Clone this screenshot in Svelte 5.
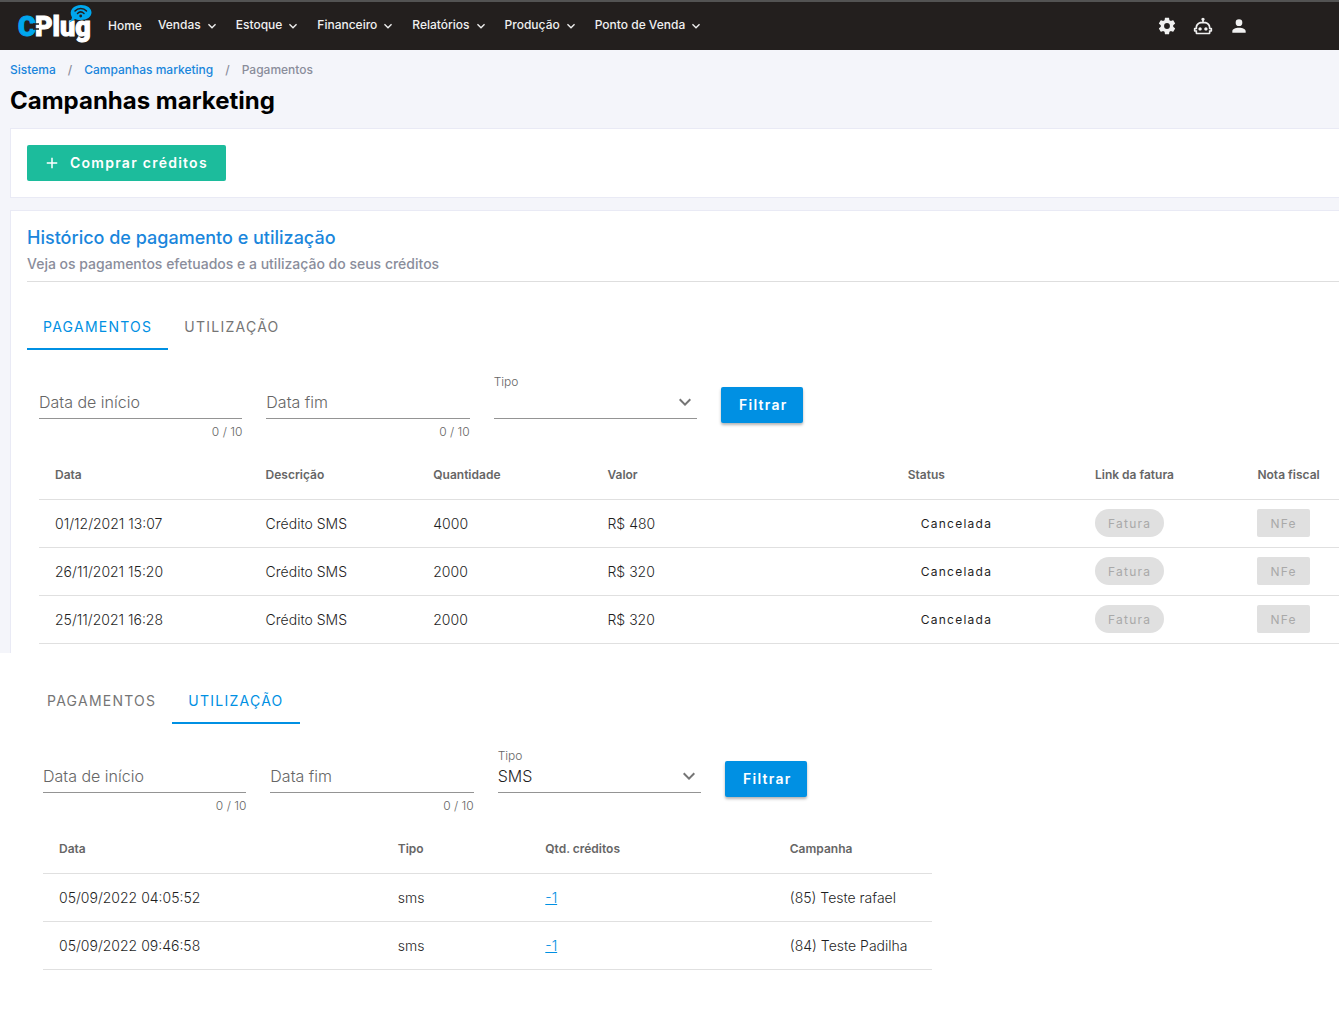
<script lang="ts">
  type Tab = 'pagamentos' | 'utilizacao';

  const menu = ['Vendas', 'Estoque', 'Financeiro', 'Relatórios', 'Produção', 'Ponto de Venda'];

  const tabs: { id: Tab; label: string }[] = [
    { id: 'pagamentos', label: 'Pagamentos' },
    { id: 'utilizacao', label: 'Utilização' }
  ];

  const payments = [
    { date: '01/12/2021 13:07', description: 'Crédito SMS', amount: 4000, value: 'R$ 480', status: 'Cancelada' },
    { date: '26/11/2021 15:20', description: 'Crédito SMS', amount: 2000, value: 'R$ 320', status: 'Cancelada' },
    { date: '25/11/2021 16:28', description: 'Crédito SMS', amount: 2000, value: 'R$ 320', status: 'Cancelada' }
  ];

  const usage = [
    { date: '05/09/2022 04:05:52', type: 'sms', credits: -1, campaign: '(85) Teste rafael' },
    { date: '05/09/2022 09:46:58', type: 'sms', credits: -1, campaign: '(84) Teste Padilha' }
  ];

  let filters = $state({
    pagamentos: { start: '', end: '', type: '' },
    utilizacao: { start: '', end: '', type: 'SMS' }
  });

  const icons = {
    chevron: 'M7.41,8.58L12,13.17L16.59,8.58L18,10L12,16L6,10L7.41,8.58Z',
    plus: 'M19,13H13V19H11V13H5V11H11V5H13V11H19V13Z',
    cog: 'M12,15.5A3.5,3.5 0 0,1 8.5,12A3.5,3.5 0 0,1 12,8.5A3.5,3.5 0 0,1 15.5,12A3.5,3.5 0 0,1 12,15.5M19.43,12.97C19.47,12.65 19.5,12.33 19.5,12C19.5,11.67 19.47,11.34 19.43,11L21.54,9.37C21.73,9.22 21.78,8.95 21.66,8.73L19.66,5.27C19.54,5.05 19.27,4.96 19.05,5.05L16.56,6.05C16.04,5.66 15.5,5.32 14.87,5.07L14.5,2.42C14.46,2.18 14.25,2 14,2H10C9.75,2 9.54,2.18 9.5,2.42L9.13,5.07C8.5,5.32 7.96,5.66 7.44,6.05L4.95,5.05C4.73,4.96 4.46,5.05 4.34,5.27L2.34,8.73C2.21,8.95 2.27,9.22 2.46,9.37L4.57,11C4.53,11.34 4.5,11.67 4.5,12C4.5,12.33 4.53,12.65 4.57,12.97L2.46,14.63C2.27,14.78 2.21,15.05 2.34,15.27L4.34,18.73C4.46,18.95 4.73,19.03 4.95,18.95L7.44,17.94C7.96,18.34 8.5,18.68 9.13,18.93L9.5,21.58C9.54,21.82 9.75,22 10,22H14C14.25,22 14.46,21.82 14.5,21.58L14.87,18.93C15.5,18.67 16.04,18.34 16.56,17.94L19.05,18.95C19.27,19.03 19.54,18.95 19.66,18.73L21.66,15.27C21.78,15.05 21.73,14.78 21.54,14.63L19.43,12.97Z',
    robot: 'M17.5 15.5C17.5 16.61 16.61 17.5 15.5 17.5S13.5 16.61 13.5 15.5 14.4 13.5 15.5 13.5 17.5 14.4 17.5 15.5M8.5 13.5C7.4 13.5 6.5 14.4 6.5 15.5S7.4 17.5 8.5 17.5 10.5 16.61 10.5 15.5 9.61 13.5 8.5 13.5M23 15V18C23 18.55 22.55 19 22 19H21V20C21 21.11 20.11 22 19 22H5C3.9 22 3 21.11 3 20V19H2C1.45 19 1 18.55 1 18V15C1 14.45 1.45 14 2 14H3C3 10.13 6.13 7 10 7H11V5.73C10.4 5.39 10 4.74 10 4C10 2.9 10.9 2 12 2S14 2.9 14 4C14 4.74 13.6 5.39 13 5.73V7H14C17.87 7 21 10.13 21 14H22C22.55 14 23 14.45 23 15M21 16H19V14C19 11.24 16.76 9 14 9H10C7.24 9 5 11.24 5 14V16H3V17H5V20H19V17H21V16Z',
    account: 'M12,4A4,4 0 0,1 16,8A4,4 0 0,1 12,12A4,4 0 0,1 8,8A4,4 0 0,1 12,4M12,14C16.42,14 20,15.79 20,18V20H4V18C4,15.79 7.58,14 12,14Z'
  };
</script>

{#snippet icon(path: string, size: number)}
  <svg class="icon" width={size} height={size} viewBox="0 0 24 24" aria-hidden="true"><path d={path} /></svg>
{/snippet}

{#snippet tabBar(active: Tab)}
  <div class="tabs" role="tablist">
    {#each tabs as tab}
      <button class="tab" class:active={tab.id === active} role="tab" aria-selected={tab.id === active}>{tab.label}</button>
    {/each}
  </div>
{/snippet}

{#snippet filterForm(id: Tab)}
  <form class="filters" onsubmit={(e) => e.preventDefault()}>
    <div class="fields">
      <div class="field">
        <input id="{id}-start" maxlength="10" bind:value={filters[id].start} />
        {#if !filters[id].start}<label class="inside" for="{id}-start">Data de início</label>{/if}
        <span class="counter">{filters[id].start.length} / 10</span>
      </div>
      <div class="field">
        <input id="{id}-end" maxlength="10" bind:value={filters[id].end} />
        {#if !filters[id].end}<label class="inside" for="{id}-end">Data fim</label>{/if}
        <span class="counter">{filters[id].end.length} / 10</span>
      </div>
      <div class="field">
        <label class="above" for="{id}-type">Tipo</label>
        <select id="{id}-type" bind:value={filters[id].type}>
          <option value=""></option>
          <option value="SMS">SMS</option>
        </select>
        <span class="arrow">{@render icon(icons.chevron, 24)}</span>
      </div>
    </div>
    <button class="btn btn-primary" type="submit">Filtrar</button>
  </form>
{/snippet}

<header class="topbar">
  <a class="logo" href="#home" aria-label="CPlug">
    <svg width="76" height="40" viewBox="0 0 76 40" aria-hidden="true">
      <text x="1" y="30" class="logo-c">C</text>
      <text x="18" y="30" class="logo-text">Plug</text>
      <path d="M16 18h6M16 23h6" stroke="#231f1e" stroke-width="1.500" />
      <path d="M51.500 16.500c2-1 3-3 3.500-5C51 4 57-1 64-1c6 0 10.500 3 10.500 7.500S70 14 64 14c-2 0-4 0-6-1-2 2-4 3-6.500 3.500z" fill="#00a7ee" />
      <g fill="none" stroke="#231f1e" stroke-width="1.500" stroke-linecap="round">
        <path d="M58 5c3-3.500 8.500-3.500 11.500 0" />
        <path d="M60.500 7.500c2-2 4.500-2 6.500 0" />
      </g>
      <circle cx="63.700" cy="10" r="1.400" fill="#231f1e" />
    </svg>
  </a>
  <nav class="menu">
    <a class="home" href="#home">Home</a>
    {#each menu as item}
      <button class="menu-item"><span>{item}</span>{@render icon(icons.chevron, 16)}</button>
    {/each}
  </nav>
  <div class="actions">
    <button aria-label="Configurações">{@render icon(icons.cog, 20)}</button>
    <button aria-label="Assistente">{@render icon(icons.robot, 20)}</button>
    <button aria-label="Conta">{@render icon(icons.account, 20)}</button>
  </div>
</header>

<main class="page">
  <nav class="breadcrumbs">
    <a href="#sistema">Sistema</a>
    <span>/</span>
    <a href="#campanhas">Campanhas marketing</a>
    <span>/</span>
    <span>Pagamentos</span>
  </nav>
  <h1>Campanhas marketing</h1>

  <section class="card">
    <button class="btn btn-success">{@render icon(icons.plus, 18)}<span>Comprar créditos</span></button>
  </section>

  <section class="card history">
    <div class="card-header">
      <h2>Histórico de pagamento e utilização</h2>
      <p>Veja os pagamentos efetuados e a utilização do seus créditos</p>
    </div>
    {@render tabBar('pagamentos')}
    <div class="panel">
      {@render filterForm('pagamentos')}
      <table class="payments">
        <thead>
          <tr>
            <th>Data</th>
            <th>Descrição</th>
            <th>Quantidade</th>
            <th>Valor</th>
            <th>Status</th>
            <th>Link da fatura</th>
            <th>Nota fiscal</th>
          </tr>
        </thead>
        <tbody>
          {#each payments as p}
            <tr>
              <td>{p.date}</td>
              <td>{p.description}</td>
              <td>{p.amount}</td>
              <td>{p.value}</td>
              <td><span class="chip">{p.status}</span></td>
              <td><button class="chip disabled round" disabled>Fatura</button></td>
              <td><button class="chip disabled" disabled>NFe</button></td>
            </tr>
          {/each}
        </tbody>
      </table>
    </div>
  </section>
</main>

<section class="usage">
  {@render tabBar('utilizacao')}
  <div class="panel">
    {@render filterForm('utilizacao')}
    <table class="usage-table">
      <thead>
        <tr>
          <th>Data</th>
          <th>Tipo</th>
          <th>Qtd. créditos</th>
          <th>Campanha</th>
        </tr>
      </thead>
      <tbody>
        {#each usage as u}
          <tr>
            <td>{u.date}</td>
            <td>{u.type}</td>
            <td><a href="#creditos">{u.credits}</a></td>
            <td>{u.campaign}</td>
          </tr>
        {/each}
      </tbody>
    </table>
  </div>
</section>

<style>
  :global(body) {
    margin: 0;
    background: #fff;
    color: #1f1f1f;
    font-family: Inter, 'Liberation Sans', sans-serif;
    font-size: 14px;
    overflow-x: hidden;
  }

  button, input, select { font: inherit; color: inherit; border: 0; background: none; padding: 0; margin: 0; }
  button { cursor: pointer; }
  a { color: #1a86dc; text-decoration: none; }
  .icon { fill: currentColor; display: block; flex: none; }

  .topbar {
    box-sizing: border-box;
    height: 50px;
    padding: 0 90px 0 17px;
    display: flex;
    align-items: center;
    background: #231f1e;
    border-top: 2px solid #535353;
    color: #f0f0f0;
  }
  .logo { display: block; }
  .logo svg { display: block; overflow: visible; }
  .logo-c, .logo-text { font-family: Roboto, sans-serif; font-weight: 900; font-size: 27px; }
  .logo-c { fill: #00a7ee; stroke: #00a7ee; }
  .logo-text { fill: #fff; stroke: #fff; }

  .menu { display: flex; align-items: center; gap: 16px; margin-left: 15px; font-size: 12px; line-height: 16px; font-weight: 500; }
  .menu a { color: inherit; }
  .menu-item { display: flex; align-items: center; gap: 3px; }
  .menu-item span { padding-bottom: 3px; }
  .actions { display: flex; gap: 16px; margin-left: auto; }

  .page { background: #f4f5fa; padding: 10px 0 0 10px; }
  .breadcrumbs { display: flex; gap: 12px; font-size: 12px; line-height: 20px; font-weight: 500; color: #8a8d9b; }
  h1 { margin: 5px 0 11px; font-size: 24px; line-height: 32px; font-weight: 700; color: #000; }

  .card {
    background: #fff;
    border: 1px solid #e9eaf5;
    border-right: 0;
    padding: 16px 0 16px 16px;
  }
  .history { margin-top: 12px; border-bottom: 0; padding-bottom: 9px; }
  .card-header { border-bottom: 1px solid #dedede; padding-bottom: 7px; margin-bottom: 20px; }
  h2 { margin: 0; font-size: 18px; line-height: 22px; font-weight: 500; color: #1a86dc; }
  .card-header p { margin: 5px 0 0; line-height: 20px; font-weight: 500; color: #8a8d9b; }

  .btn {
    box-sizing: border-box;
    display: flex;
    align-items: center;
    height: 36px;
    border-radius: 2px;
    color: #fff;
    font-weight: 600;
    line-height: 16px;
    letter-spacing: 1.25px;
  }
  .btn-success { background: #1cbc9c; gap: 9px; padding: 0 18px 0 16px; }
  .btn-primary {
    background: #0090e3;
    padding: 0 16px 0 18px;
    box-shadow: 0 2px 3px rgba(0, 0, 0, 0.3);
  }

  .tabs { display: flex; }
  .tab {
    box-sizing: border-box;
    height: 48px;
    padding: 2px 16px 0;
    border-bottom: 2px solid transparent;
    color: #757575;
    letter-spacing: 1.25px;
    text-transform: uppercase;
  }
  .tab.active { color: #0090e3; border-bottom-color: #0090e3; }

  .panel { padding-left: 12px; }
  .filters { display: flex; gap: 24px; padding: 24px 0 12px; align-items: flex-start; }
  .filters .btn { margin-top: 13px; }
  .fields { display: grid; grid-template-columns: repeat(3, 1fr); gap: 24px; flex: 0 1 658px; }
  .field { display: grid; grid-template-rows: 16px 29px 21px; }
  .field input, .field select {
    grid-area: 2 / 1;
    box-sizing: border-box;
    width: 100%;
    min-width: 0;
    padding-bottom: 4px;
    border-bottom: 1px solid #949494;
    border-radius: 0;
    appearance: none;
    outline: none;
    font-size: 16px;
    font-weight: 300;
  }
  .inside { grid-area: 2 / 1; font-size: 16px; line-height: 24px; font-weight: 300; color: #666; pointer-events: none; }
  .above { grid-area: 1 / 1; font-size: 12px; line-height: 16px; font-weight: 300; color: #666; }
  .arrow { grid-area: 2 / 1; justify-self: end; color: #757575; pointer-events: none; }
  .counter { grid-area: 3 / 1; padding-top: 5px; text-align: right; font-size: 12px; line-height: 16px; font-weight: 300; color: #666; }

  table { width: 100%; table-layout: fixed; border-collapse: separate; border-spacing: 0; }
  th, td {
    box-sizing: border-box;
    height: 48px;
    padding: 0 0 0 16px;
    border-bottom: 1px solid #e0e0e0;
    text-align: left;
    white-space: nowrap;
  }
  th { padding-bottom: 2px; font-size: 12px; font-weight: 600; color: #666; }
  td { font-weight: 300; }
  td a { color: #0090e3; text-decoration: underline; }

  .payments th:nth-child(1) { width: 16.2%; }
  .payments th:nth-child(2) { width: 12.9%; }
  .payments th:nth-child(3) { width: 13.4%; }
  .payments th:nth-child(4) { width: 23.1%; }
  .payments th:nth-child(5) { width: 14.4%; }
  .payments th:nth-child(6) { width: 12.5%; }
  .payments td { padding-bottom: 1px; }

  .chip {
    display: flex;
    align-items: center;
    width: max-content;
    height: 28px;
    padding: 0 13px;
    font-size: 12px;
    font-weight: 400;
    letter-spacing: 1.25px;
  }
  .disabled { background: #e0e0e0; color: #a9a9a9; border-radius: 2px; cursor: default; }
  .round { border-radius: 14px; }

  .usage { padding: 23px 0 56px 31px; }
  .usage-table { width: 68.6%; }
  .usage-table th:nth-child(1) { width: 38.1%; }
  .usage-table th:nth-child(2) { width: 16.6%; }
  .usage-table th:nth-child(3) { width: 27.5%; }
</style>
